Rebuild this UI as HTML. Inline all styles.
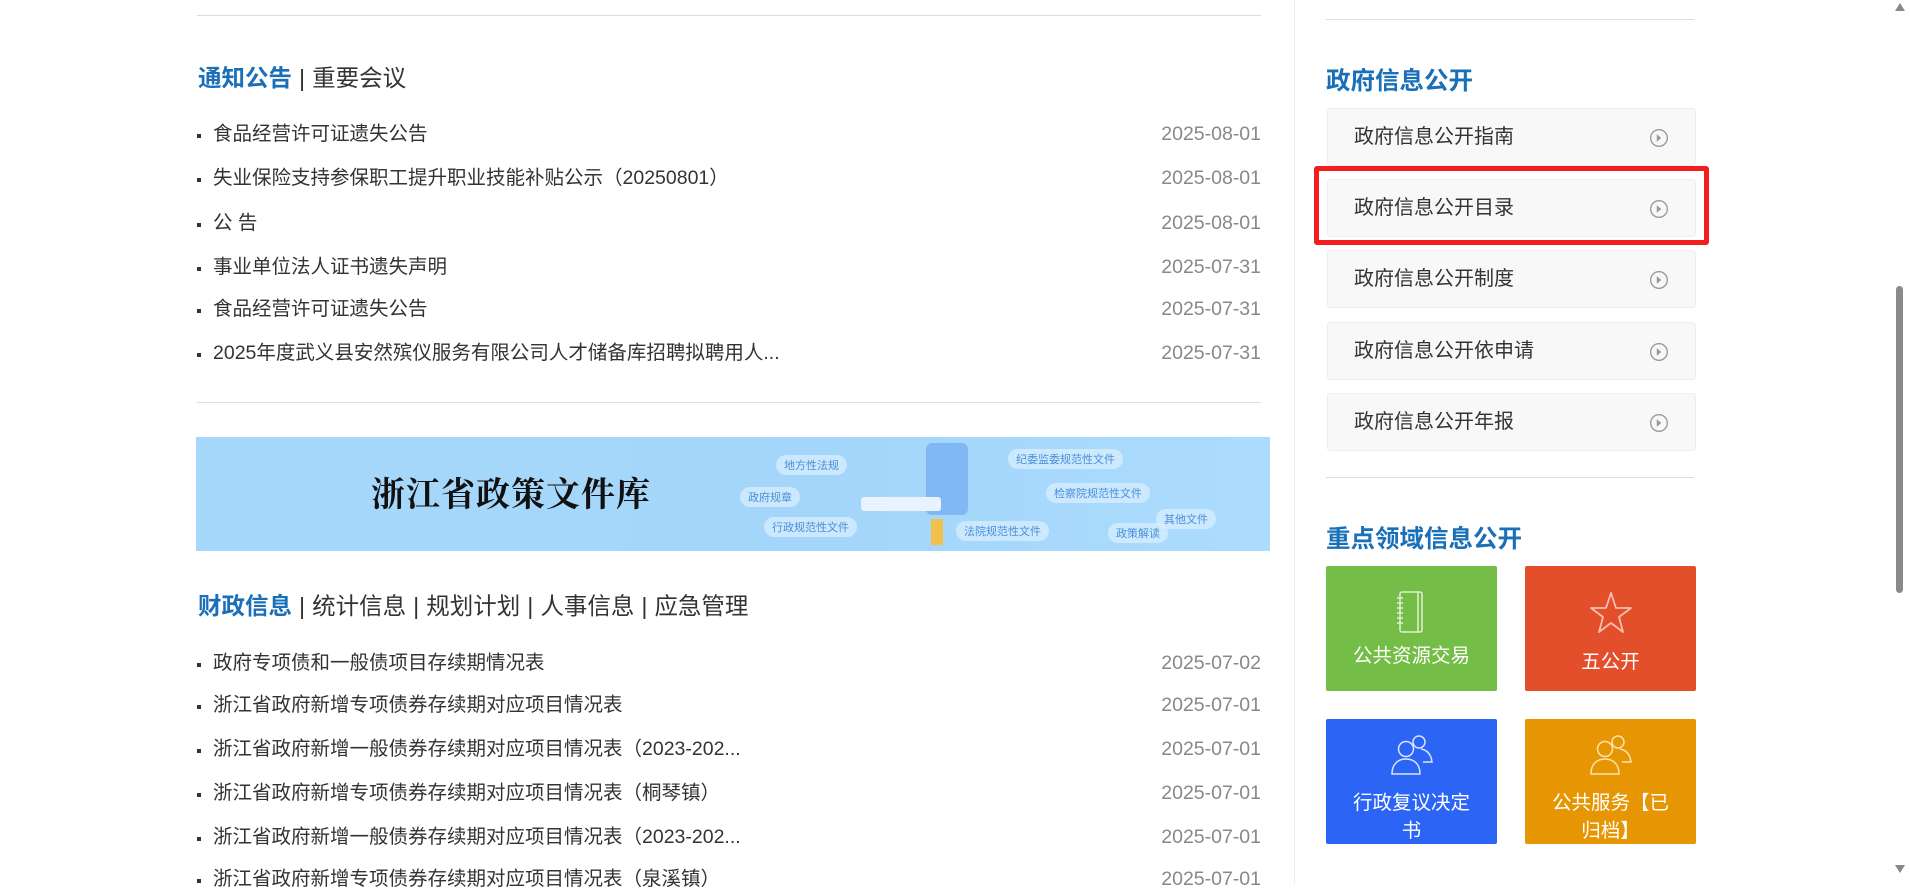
<!DOCTYPE html>
<html><head><meta charset="utf-8"><style>
*{margin:0;padding:0;box-sizing:border-box}
body{width:1910px;height:885px;overflow:hidden;background:#fff;font-family:"Liberation Sans","Noto Sans CJK SC",sans-serif;position:relative;color:#333}
.a{position:absolute}
.hr{position:absolute;height:1px;background:#ddd}
.h{position:absolute;font-size:23.5px;color:#333;white-space:nowrap}
.h b{color:#1a6fb9;font-weight:bold}
.h s{text-decoration:none;margin:0 7px}
.li{position:absolute;left:197px;width:1064px;font-size:19.5px;height:26px;line-height:26px;color:#333}
.li:before{content:"";position:absolute;left:0;top:13px;width:4px;height:4px;background:#333}
.li span{position:absolute;left:16px;white-space:nowrap}
.li i{position:absolute;right:0;font-style:normal;color:#888}
.box{position:absolute;left:1327px;width:369px;height:58px;background:#f8f8f8;border:1px solid #eee;border-radius:3px;font-size:20px;line-height:56px;padding-left:26px;color:#333}
.box svg{position:absolute;right:26px;top:19px}
.rt{position:absolute;font-size:24.5px;font-weight:bold;color:#1a6fb9}
.tile{position:absolute;width:171px;height:125px;border-radius:2px;color:#fff;font-size:19.5px;text-align:center;line-height:28px}
.bub{position:absolute;background:rgba(220,240,255,.7);border-radius:10px;color:#4a8fd8;font-size:11px;padding:2px 8px}
</style></head><body>
<div class="a" style="left:1294px;top:0;width:1px;height:885px;background:#eee"></div>
<div class="hr" style="left:197px;top:15px;width:1064px"></div>
<div class="h" style="left:198px;top:59px"><b>通知公告</b><s>|</s>重要会议</div>
<div class="li" style="top:121px"><span>食品经营许可证遗失公告</span><i>2025-08-01</i></div>
<div class="li" style="top:165px"><span>失业保险支持参保职工提升职业技能补贴公示（20250801）</span><i>2025-08-01</i></div>
<div class="li" style="top:210px"><span>公 告</span><i>2025-08-01</i></div>
<div class="li" style="top:254px"><span>事业单位法人证书遗失声明</span><i>2025-07-31</i></div>
<div class="li" style="top:296px"><span>食品经营许可证遗失公告</span><i>2025-07-31</i></div>
<div class="li" style="top:340px"><span>2025年度武义县安然殡仪服务有限公司人才储备库招聘拟聘用人...</span><i>2025-07-31</i></div>
<div class="hr" style="left:197px;top:402px;width:1064px"></div>
<div class="a" style="left:196px;top:437px;width:1074px;height:114px;background:linear-gradient(90deg,#a6d8fb,#a3d6fa 60%,#acdcfd);overflow:hidden">
<div class="a" style="left:175px;top:30px;font-family:'Noto Serif CJK SC',serif;font-size:34px;font-weight:bold;color:#111;letter-spacing:1px">浙江省政策文件库</div>
<div class="bub" style="left:580px;top:18px">地方性法规</div>
<div class="bub" style="left:544px;top:50px">政府规章</div>
<div class="bub" style="left:568px;top:80px">行政规范性文件</div>
<div class="bub" style="left:812px;top:12px">纪委监委规范性文件</div>
<div class="bub" style="left:850px;top:46px">检察院规范性文件</div>
<div class="bub" style="left:760px;top:84px">法院规范性文件</div>
<div class="bub" style="left:912px;top:86px">政策解读</div>
<div class="bub" style="left:960px;top:72px">其他文件</div>
<div class="a" style="left:730px;top:6px;width:42px;height:72px;border-radius:6px;background:#7fb8f5"></div>
<div class="a" style="left:665px;top:60px;width:80px;height:14px;background:#e8f3ff;border-radius:3px"></div>
<div class="a" style="left:735px;top:82px;width:12px;height:26px;background:#f1c04a"></div>
</div>
<div class="h" style="left:198px;top:587px"><b>财政信息</b><s>|</s>统计信息<s>|</s>规划计划<s>|</s>人事信息<s>|</s>应急管理</div>
<div class="li" style="top:650px"><span>政府专项债和一般债项目存续期情况表</span><i>2025-07-02</i></div>
<div class="li" style="top:692px"><span>浙江省政府新增专项债券存续期对应项目情况表</span><i>2025-07-01</i></div>
<div class="li" style="top:736px"><span>浙江省政府新增一般债券存续期对应项目情况表（2023-202...</span><i>2025-07-01</i></div>
<div class="li" style="top:780px"><span>浙江省政府新增专项债券存续期对应项目情况表（桐琴镇）</span><i>2025-07-01</i></div>
<div class="li" style="top:824px"><span>浙江省政府新增一般债券存续期对应项目情况表（2023-202...</span><i>2025-07-01</i></div>
<div class="li" style="top:866px"><span>浙江省政府新增专项债券存续期对应项目情况表（泉溪镇）</span><i>2025-07-01</i></div>

<div class="hr" style="left:1326px;top:19px;width:368px"></div>
<div class="rt" style="left:1326px;top:62px">政府信息公开</div>
<div class="box" style="top:108px">政府信息公开指南<svg width="20" height="20" viewBox="0 0 18 18"><circle cx="9" cy="9" r="7.5" fill="none" stroke="#999" stroke-width="1.2"/><path d="M7 5.5L11 9L7 12.5Z" fill="#999"/></svg></div>
<div class="box" style="top:179px">政府信息公开目录<svg width="20" height="20" viewBox="0 0 18 18"><circle cx="9" cy="9" r="7.5" fill="none" stroke="#999" stroke-width="1.2"/><path d="M7 5.5L11 9L7 12.5Z" fill="#999"/></svg></div>
<div class="box" style="top:250px">政府信息公开制度<svg width="20" height="20" viewBox="0 0 18 18"><circle cx="9" cy="9" r="7.5" fill="none" stroke="#999" stroke-width="1.2"/><path d="M7 5.5L11 9L7 12.5Z" fill="#999"/></svg></div>
<div class="box" style="top:322px">政府信息公开依申请<svg width="20" height="20" viewBox="0 0 18 18"><circle cx="9" cy="9" r="7.5" fill="none" stroke="#999" stroke-width="1.2"/><path d="M7 5.5L11 9L7 12.5Z" fill="#999"/></svg></div>
<div class="box" style="top:393px">政府信息公开年报<svg width="20" height="20" viewBox="0 0 18 18"><circle cx="9" cy="9" r="7.5" fill="none" stroke="#999" stroke-width="1.2"/><path d="M7 5.5L11 9L7 12.5Z" fill="#999"/></svg></div>
<div class="a" style="left:1314px;top:166px;width:395px;height:79px;border:5px solid #f41d1d;border-radius:3px"></div>
<div class="hr" style="left:1326px;top:477px;width:368px"></div>
<div class="rt" style="left:1326px;top:520px">重点领域信息公开</div>

<div class="tile" style="left:1326px;top:566px;background:#74bd46">
<svg width="40" height="44" viewBox="0 0 40 44" style="margin-top:24px"><rect x="8" y="2" width="22" height="40" rx="2" fill="none" stroke="#dff0d2" stroke-width="1.5"/><line x1="26" y1="2" x2="26" y2="42" stroke="#dff0d2" stroke-width="1.5"/><path d="M5 8h6M5 13h6M5 18h6M5 23h6M5 28h6M5 33h6" stroke="#dff0d2" stroke-width="1.5"/></svg>
<div>公共资源交易</div></div>
<div class="tile" style="left:1525px;top:566px;background:#e34e2b">
<svg width="46" height="46" viewBox="0 0 46 46" style="margin-top:24px"><path d="M23 3L28 18H43L31 27L35 42L23 33L11 42L15 27L3 18H18Z" fill="none" stroke="#f5c0b0" stroke-width="1.8" stroke-linejoin="round"/></svg>
<div style="margin-top:4px">五公开</div></div>
<div class="tile" style="left:1326px;top:719px;background:#2c64f5">
<svg width="46" height="44" viewBox="0 0 46 44" style="margin-top:14px"><circle cx="17" cy="16" r="7.5" fill="none" stroke="#dbe4ff" stroke-width="1.5"/><path d="M3 41c0-10 6-15 14-15s14 5 14 15z" fill="none" stroke="#dbe4ff" stroke-width="1.5"/><circle cx="30" cy="9" r="6" fill="none" stroke="#dbe4ff" stroke-width="1.5"/><path d="M32 16c6 1 10 5 11 13h-9" fill="none" stroke="#dbe4ff" stroke-width="1.5"/></svg>
<div style="line-height:28px;margin-top:4px">行政复议决定<br>书</div></div>
<div class="tile" style="left:1525px;top:719px;background:#e59602">
<svg width="46" height="44" viewBox="0 0 46 44" style="margin-top:14px"><circle cx="17" cy="16" r="7.5" fill="none" stroke="#fbe3b0" stroke-width="1.5"/><path d="M3 41c0-10 6-15 14-15s14 5 14 15z" fill="none" stroke="#fbe3b0" stroke-width="1.5"/><circle cx="30" cy="9" r="6" fill="none" stroke="#fbe3b0" stroke-width="1.5"/><path d="M32 16c6 1 10 5 11 13h-9" fill="none" stroke="#fbe3b0" stroke-width="1.5"/></svg>
<div style="line-height:28px;margin-top:4px">公共服务【已<br>归档】</div></div>

<div class="a" style="left:1896px;top:286px;width:7px;height:307px;background:#8a8a8a;border-radius:4px"></div>
<svg class="a" style="left:1894px;top:864px" width="12" height="10"><path d="M1 1H11L6 9Z" fill="#888"/></svg>
<svg class="a" style="left:1894px;top:2px" width="12" height="10"><path d="M1 9H11L6 1Z" fill="#888"/></svg>
</body></html>
